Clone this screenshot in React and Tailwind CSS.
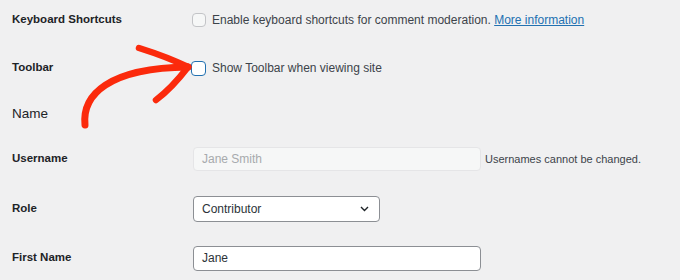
const labelCls =
  "w-[181px] shrink-0 text-[11.5px] font-semibold text-[#1d2327]";

const Row = ({ label, className, children }) => (
  <div className={`flex items-center pl-3 ${className}`}>
    <div className={labelCls}>{label}</div>
    <div className="flex items-center">{children}</div>
  </div>
);

const Arrow = () => (
  <svg
    className="absolute left-0 top-0 pointer-events-none"
    width="680"
    height="280"
    viewBox="0 0 680 280"
    fill="none"
  >
    <path
      d="M85 125 C 82 95, 108 68, 188 67"
      stroke="#fb2a0c"
      strokeWidth="7"
      strokeLinecap="round"
    />
    <path
      d="M139 48 C 158 54, 174 60, 188 67"
      stroke="#fb2a0c"
      strokeWidth="6.5"
      strokeLinecap="round"
    />
    <path
      d="M188 67 C 178 80, 168 91, 156 100"
      stroke="#fb2a0c"
      strokeWidth="6.5"
      strokeLinecap="round"
    />
  </svg>
);

export default function App() {
  return (
    <div
      className="relative w-[680px] h-[280px] overflow-hidden bg-[#f0f0f1] text-[#3c434a]"
      style={{ fontFamily: '"Liberation Sans", Arial, sans-serif' }}
    >
      <Row label="Keyboard Shortcuts" className="h-10">
        <span className="w-[14px] h-[14px] rounded-[4px] border border-[#c3c4c7] bg-[#f6f7f7] -ml-px"></span>
        <span className="ml-[6px] text-[12px]">
          Enable keyboard shortcuts for comment moderation.{" "}
          <a href="#" className="text-[#2271b1] underline">
            More information
          </a>
        </span>
      </Row>

      <Row label="Toolbar" className="h-14">
        <span className="w-[15px] h-[15px] rounded-[4px] border-[1.5px] border-[#2271b1] bg-white -ml-[2px]"></span>
        <span className="ml-[6px] text-[12px]">Show Toolbar when viewing site</span>
      </Row>

      <div className="h-9 flex items-center pl-3 text-[13.5px] text-[#1d2327]">
        Name
      </div>

      <Row label="Username" className="h-[54px]">
        <div className="w-[288px] h-[24px] rounded-[4px] border border-[#e5e5e7] bg-[#f6f7f7] px-2 flex items-center text-[12px] text-[#a7aaad]">
          Jane Smith
        </div>
        <span className="ml-1 text-[11px]">Usernames cannot be changed.</span>
      </Row>

      <Row label="Role" className="h-[46px]">
        <div className="w-[187px] h-[26px] rounded-[4px] border border-[#8c8f94] bg-white pl-2 pr-[10px] flex items-center justify-between text-[12px] text-[#2c3338]">
          <span>Contributor</span>
          <svg width="9" height="6" viewBox="0 0 9 6" fill="none">
            <path d="M1 1 L4.5 4.5 L8 1" stroke="#1d2327" strokeWidth="1.4" />
          </svg>
        </div>
      </Row>

      <Row label="First Name" className="h-[52px]">
        <div className="w-[288px] h-[25px] rounded-[4px] border border-[#8c8f94] bg-white px-2 flex items-center text-[12px] text-[#2c3338]">
          Jane
        </div>
      </Row>

      <Arrow />
    </div>
  );
}
